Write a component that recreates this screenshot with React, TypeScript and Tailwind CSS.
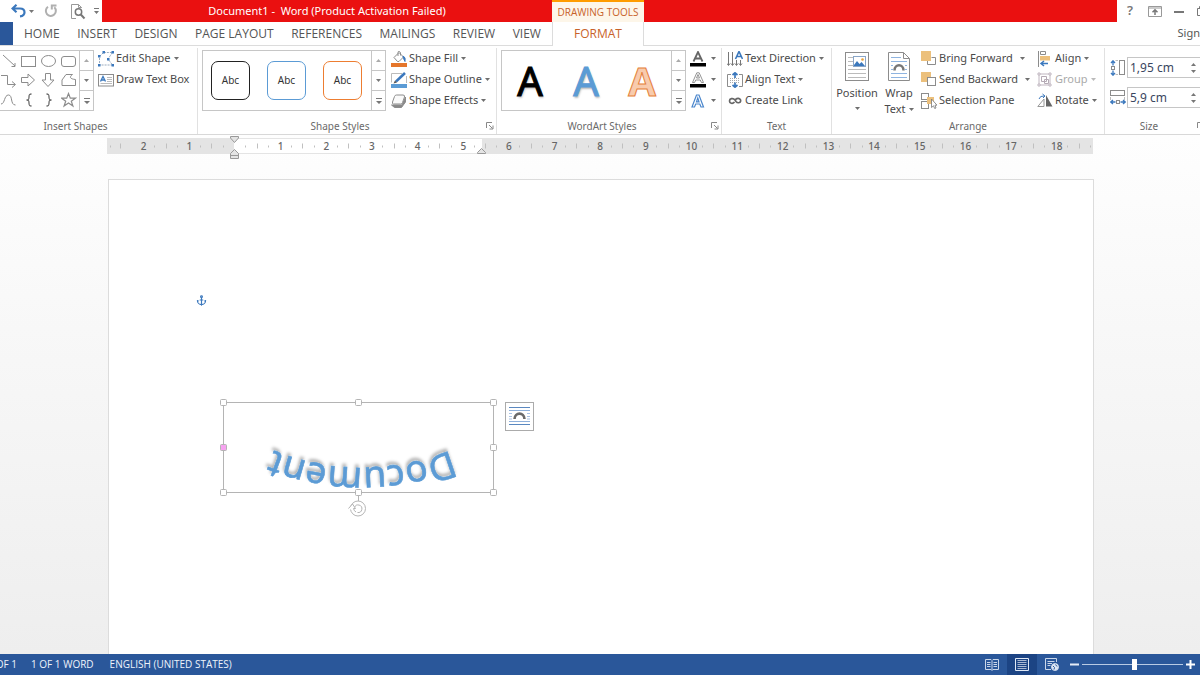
import React, { ReactNode } from "react";
import { Anchor } from "lucide-react";

const CAPS = "font-['Open_Sans','Noto_Sans',sans-serif]";

function Caret({ className = "" }: { className?: string }) {
  return (
    <svg className={`shrink-0 ${className}`} width="5" height="3" viewBox="0 0 5 3" aria-hidden="true">
      <path d="M0 0H5L2.5 3Z" fill="currentColor" />
    </svg>
  );
}

function Icon({ w = 16, h = 16, children }: { w?: number; h?: number; children: ReactNode }) {
  return (
    <svg className="shrink-0" width={w} height={h} viewBox={`0 0 ${w} ${h}`} fill="none" stroke="#8c8c8c" strokeWidth="1" aria-hidden="true">
      {children}
    </svg>
  );
}

/* ---------- Title bar ---------- */

function TitleBar() {
  return (
    <header className="flex h-[22px] bg-white text-[#777]">
      <div className="flex w-[102px] shrink-0 items-center pl-[11px]">
        <button aria-label="Undo" className="flex w-[18px] items-center text-[#3b78bd]">
          <svg width="15" height="14" viewBox="0 0 15 14" fill="none" stroke="currentColor" strokeWidth="2.200">
            <path d="M5.500.8 1.500 4.500l4 3.700M2 4.500h7c3 0 4.500 1.600 4.500 3.700 0 2.300-1.700 3.800-4.500 4.100" />
          </svg>
        </button>
        <button aria-label="Undo options" className="flex w-[15px] items-center">
          <Caret />
        </button>
        <button aria-label="Repeat" className="flex w-[26px] items-center text-[#b0b0b0]">
          <svg width="14" height="14" viewBox="0 0 14 14" fill="none" stroke="currentColor" strokeWidth="2">
            <path d="M4 2.800A5 5 0 1 0 10.300 3.300M7.800 5.500V1.500H12.500" />
          </svg>
        </button>
        <button aria-label="Print preview" className="flex w-[24px] items-center">
          <svg width="16" height="17" viewBox="0 0 16 17" fill="none" stroke="currentColor" strokeWidth="1">
            <path d="M6 15.500H1.500V1.500H8.500L11.500 4.500V5M8.500 1.500V4.500H11.500" stroke="#999" />
            <circle cx="8.500" cy="9" r="3.200" strokeWidth="1.500" />
            <path d="M10.800 11.500 14.500 15.500" strokeWidth="2" />
          </svg>
        </button>
        <button aria-label="Customize toolbar" className="flex items-center">
          <svg width="5" height="6" viewBox="0 0 5 6">
            <path d="M0 0H5V1H0ZM0 3H5L2.500 6Z" fill="currentColor" />
          </svg>
        </button>
      </div>
      <div className="flex w-[450px] shrink-0 items-center justify-center bg-[#ea1010] text-[11px] text-white">
        <h1 className="whitespace-pre">Document1 -  Word (Product Activation Failed)</h1>
      </div>
      <div className={`flex w-[92px] shrink-0 items-center justify-center border-t-2 border-[#ff9c00] bg-[#fdf6e9] text-[10px] text-[#c8622a] ${CAPS}`}>
        DRAWING TOOLS
      </div>
      <div className="min-w-0 flex-1 bg-[#ea1010]" />
      <div className="flex w-[83px] shrink-0 items-center overflow-hidden">
        <button aria-label="Help" className="w-[26px] shrink-0 text-center text-[13px] font-semibold">?</button>
        <button aria-label="Ribbon display options" className="flex w-[24px] shrink-0 justify-center">
          <svg width="14" height="11" viewBox="0 0 14 11" fill="none" stroke="currentColor">
            <path d="M.5.5H13.500V10.500H.5ZM.5 2H13.500" stroke="#999" />
            <path d="M7 9V4M4.500 6.300 7 3.900 9.500 6.300" strokeWidth="1.500" />
          </svg>
        </button>
        <button aria-label="Minimize" className="flex w-[24px] shrink-0 justify-center">
          <svg width="10" height="6" viewBox="0 0 10 6"><path d="M0 3H10V5H0Z" fill="currentColor" /></svg>
        </button>
        <button aria-label="Restore" className="flex w-[24px] shrink-0 pl-[6px]">
          <svg width="10" height="10" viewBox="0 0 10 10" fill="none" stroke="currentColor"><path d="M.5 2.500H7.500V9.500H.5ZM2.500 2.500V.5H9.500V7.500H7.500" /></svg>
        </button>
      </div>
    </header>
  );
}

/* ---------- Ribbon tabs ---------- */

const TABS = ["HOME", "INSERT", "DESIGN", "PAGE LAYOUT", "REFERENCES", "MAILINGS", "REVIEW", "VIEW"];

function Tabs() {
  return (
    <nav className={`flex h-[24px] bg-white text-[12px] text-[#555] ${CAPS}`}>
      <div className="flex w-[552px] shrink-0 border-b border-[#dcdcdc]">
        <button aria-label="File" className="w-[13px] shrink-0 bg-[#2a579a]" />
        <div className="flex flex-1 items-center justify-between pl-[11px] pr-[11px]">
          {TABS.map((t) => (
            <button key={t} className="whitespace-nowrap">{t}</button>
          ))}
        </div>
      </div>
      <button className="w-[92px] shrink-0 border-x border-[#dcdcdc] text-[#c8622a]">FORMAT</button>
      <div className="flex min-w-0 flex-1 items-center justify-end border-b border-[#dcdcdc]">
        <a href="#signin" className="whitespace-nowrap font-['Noto_Sans',sans-serif] text-[11px]">Sign</a>
      </div>
    </nav>
  );
}

/* ---------- Ribbon building blocks ---------- */

function Group({ label, className, launcher, children }: { label: string; className: string; launcher?: boolean; children: ReactNode }) {
  return (
    <section aria-label={label} className={`flex shrink-0 flex-col border-[#e1e1e1] ${className}`}>
      <div className="flex h-[70px]">{children}</div>
      <div className="flex h-[16px] items-center text-[10px] text-[#6a6a6a]">
        <span className="flex-1 text-center">{label}</span>
        {launcher && (
          <button aria-label={`${label} settings`} className="flex w-[14px] items-center pl-[4px]">
            <svg width="8" height="8" viewBox="0 0 8 8" fill="none" stroke="#888">
              <path d="M.5 6V.5H6M3 3 6.500 6.500M7 3.500V7H3.500" />
            </svg>
          </button>
        )}
      </div>
    </section>
  );
}

function ScrollButtons() {
  return (
    <div className="flex w-[14px] shrink-0 flex-col divide-y divide-[#c6c6c6] border-l border-[#c6c6c6] text-[#777]">
      <button aria-label="Scroll up" className="flex flex-1 items-center justify-center text-[#aaa]">
        <Caret className="rotate-180" />
      </button>
      <button aria-label="Scroll down" className="flex flex-1 items-center justify-center">
        <Caret />
      </button>
      <button aria-label="More" className="flex flex-1 items-center justify-center">
        <svg width="6" height="6" viewBox="0 0 6 6"><path d="M0 0H6V1H0ZM0 3H6L3 6Z" fill="currentColor" /></svg>
      </button>
    </div>
  );
}

function Command({ icon, label, caret, wideCaret, disabled }: { icon: ReactNode; label?: string; caret?: boolean; wideCaret?: boolean; disabled?: boolean }) {
  return (
    <button disabled={disabled} className={`flex h-[21px] items-center whitespace-nowrap text-[11px] ${disabled ? "text-[#aaa]" : "text-[#4a4a4a]"}`}>
      <span className="flex w-[18px] shrink-0 items-center">{icon}</span>
      {label}
      {caret && <Caret className={`opacity-80 ${wideCaret ? "ml-[7px]" : "ml-[3px]"}`} />}
    </button>
  );
}

/* ---------- Insert Shapes ---------- */

const SHAPES: { name: string; d: ReactNode }[] = [
  { name: "Line", d: <path d="M2 2 14 13M14 10V13.500H10.500" /> },
  { name: "Rectangle", d: <rect x=".5" y="3.500" width="14" height="10" /> },
  { name: "Oval", d: <ellipse cx="7.500" cy="8" rx="7" ry="5.500" /> },
  { name: "Rounded rectangle", d: <rect x=".5" y="3.500" width="14" height="10" rx="2.500" /> },
  { name: "Elbow connector", d: <path d="M0 3.500H6.500V12.500H14M11 9.500 14.500 12.500 11 15.500" /> },
  { name: "Right arrow", d: <path d="M.5 5.500H7V2L13.500 8 7 14V10.500H.5Z" /> },
  { name: "Down arrow", d: <path d="M4.500 1.500V8H1L7 14.500 13 8H9.500V1.500Z" /> },
  { name: "Freeform", d: <path d="M1 13.500V8L5 2.500H11.500C8 5 9 7 14.500 7.500V13.500Z" /> },
  { name: "Curve", d: <path d="M0 12C4 12 3 3 7.500 3S9 13 14.500 13" /> },
  { name: "Left brace", d: <path d="M10.500 2C8 2 8 3 8 5S8 8 5.500 8C8 8 8 9 8 11S8 14 10.500 14" stroke="#666" strokeWidth="1.300" /> },
  { name: "Right brace", d: <path d="M5.500 2C8 2 8 3 8 5S8 8 10.500 8C8 8 8 9 8 11S8 14 5.500 14" stroke="#666" strokeWidth="1.300" /> },
  { name: "Star", d: <path d="M7.500 1.500 9.300 6.200H14.300L10.300 9.200 11.900 14 7.500 11 3.100 14 4.700 9.200.700 6.200H5.700Z" strokeWidth="1.200" /> },
];

function InsertShapes() {
  return (
    <Group label="Insert Shapes" className="w-[198px] border-r [&>div:last-child]:pr-[46px]">
      <div className="mt-[2px] flex h-[61px] w-[94px] shrink-0 justify-end overflow-hidden border border-l-0 border-[#c6c6c6]">
        <div className="grid shrink-0 grid-cols-[20px_20px_20px_20px]">
          {SHAPES.map((s) => (
            <button key={s.name} aria-label={s.name} className="flex items-center justify-center">
              <Icon>{s.d}</Icon>
            </button>
          ))}
        </div>
        <ScrollButtons />
      </div>
      <div className="ml-[4px] flex flex-col">
        <Command
          label="Edit Shape"
          caret
          icon={
            <Icon>
              <path d="M1.500 5.500 5.500 1.500H14.500L10 8 14.500 14H1.500Z" strokeDasharray="2 1" stroke="#9aabbf" />
              <g fill="#3b78bd" stroke="none">
                <path d="M0 4h2.500v2.500H0zM4.500 0H7v2.500H4.500zM13.500 0H16v2.500H13.500zM9 7h2.500v2.500H9zM13.500 13H16v2.500H13.500zM0 13h2.500v2.500H0z" />
              </g>
            </Icon>
          }
        />
        <Command
          label="Draw Text Box"
          icon={
            <Icon>
              <rect x=".5" y="2.500" width="15" height="11.500" />
              <path d="M9 5.500H14M9 7.500H14M9 9.500H14M2.500 11.500H14" stroke="#bbb" />
              <path d="M2.500 9.500 5 4.500 7.500 9.500M3.500 8H6.500" stroke="#3b78bd" strokeWidth="1.300" />
            </Icon>
          }
        />
      </div>
    </Group>
  );
}

/* ---------- Shape Styles ---------- */

const SHAPE_STYLES = ["border-[#222]", "border-[#5b9bd5]", "border-[#ed7d31]"];

function ShapeStyles() {
  return (
    <Group label="Shape Styles" launcher className="w-[299px] border-r">
      <div className="ml-[4px] mt-[2px] flex h-[61px] w-[184px] shrink-0 border border-[#c6c6c6]">
        <div className="flex flex-1 items-center gap-[17px] pl-[8px]">
          {SHAPE_STYLES.map((c) => (
            <button key={c} className={`h-[39px] w-[39px] rounded-[7px] border text-[10px] text-[#333] ${c}`}>
              Abc
            </button>
          ))}
        </div>
        <ScrollButtons />
      </div>
      <div className="ml-[5px] flex flex-col">
        <Command
          label="Shape Fill"
          caret
          icon={
            <Icon>
              <path d="M3 6.500 8 1.500 12.500 6 8 10.500H6.500Z" fill="#fff" />
              <path d="M7 5V1.500Q7 0 8.500.5L9.500 1.500V4.500" />
              <path d="M12 5Q15 6 14 10.500L12.500 7.500Z" fill="#3b78bd" stroke="#3b78bd" />
              <path d="M0 12H16V16H0Z" fill="#e5762b" stroke="none" />
            </Icon>
          }
        />
        <Command
          label="Shape Outline"
          caret
          icon={
            <Icon>
              <path d="M11 1.500H.5V10.500M15.500 4V11" stroke="#bbb" />
              <path d="M5 9.500 14 1" stroke="#3b78bd" strokeWidth="2.500" />
              <path d="M2.500 11.500 4 8.500 6 10.500Z" fill="#555" stroke="none" />
              <path d="M0 12H16V16H0Z" fill="#5b9bd5" stroke="none" />
            </Icon>
          }
        />
        <Command
          label="Shape Effects"
          caret
          icon={
            <Icon>
              <path d="M.5 12 3.500 14.500H10.500L14.500 9V4L11 12Z" fill="#888" />
              <path d="M5.500 2H12Q14 2 13.500 4L11.500 9.500Q11 11 9.500 11H2.500Q1 11 1.500 9L3.500 3.500Q4 2 5.500 2Z" fill="#fafafa" />
            </Icon>
          }
        />
      </div>
    </Group>
  );
}

/* ---------- WordArt Styles ---------- */

function WordArtStyles() {
  return (
    <Group label="WordArt Styles" launcher className="w-[225px] border-r">
      <div className="ml-[4px] mt-[2px] flex h-[61px] w-[185px] shrink-0 border border-[#c6c6c6]">
        <div className="flex flex-1 items-center text-[40px] leading-none">
          <button aria-label="Black fill" className="w-[56px] text-black [-webkit-text-stroke:1px_#000] [text-shadow:1px_2px_2px_#ccc]">A</button>
          <button aria-label="Blue fill" className="w-[56px] text-[#5b9bd5] [-webkit-text-stroke:1px_#5b9bd5] [text-shadow:1px_2px_2px_#bbb]">A</button>
          <button aria-label="Orange outline" className="w-[56px] font-bold text-[#f8cbad] [-webkit-text-stroke:1px_#e5803b]">A</button>
        </div>
        <ScrollButtons />
      </div>
      <div className="ml-[4px] flex flex-col">
        <Command
          caret
          icon={
            <Icon>
              <path d="M3.500 10.500 8 1 12.500 10.500M5 7.500H11" stroke="#666" strokeWidth="1.800" />
              <path d="M0 12H16V15.500H0Z" fill="#000" stroke="none" />
            </Icon>
          }
        />
        <Command
          caret
          icon={
            <Icon>
              <path d="M2.500 10.500 6.800.8H9.200L13.500 10.500H11.400L10.300 8H5.700L4.600 10.500ZM6.500 6H9.500L8 2.500Z" stroke="#888" strokeWidth=".9" />
              <path d="M0 12H16V15.500H0Z" fill="#000" stroke="none" />
            </Icon>
          }
        />
        <Command
          caret
          icon={
            <Icon>
              <path d="M2 14 6.500 2H9L13.500 14H11L9.800 11H5.700L4.500 14ZM6.500 8.800H9L7.750 5Z" stroke="#4a86cc" strokeWidth="1.200" />
            </Icon>
          }
        />
      </div>
    </Group>
  );
}

/* ---------- Text ---------- */

function TextGroup() {
  return (
    <Group label="Text" className="w-[110px] border-r">
      <div className="ml-[5px] flex flex-col">
        <Command
          label="Text Direction"
          caret
          icon={
            <Icon>
              <path d="M1.500 1V14M5.500 1V14M9.500 9V14M13.500 9V14M0 12.500 1.500 14.500 3 12.500M4 12.500 5.500 14.500 7 12.500M8 12.500 9.500 14.500 11 12.500M12 12.500 13.500 14.500 15 12.500" stroke="#777" />
              <path d="M8.500 8 12 .5 15.500 8M9.800 5.500H14.200" stroke="#3b78bd" strokeWidth="1.600" />
            </Icon>
          }
        />
        <Command
          label="Align Text"
          caret
          icon={
            <Icon>
              <path d="M4 2.500H.5V14.500H4M12 2.500H15.500V14.500H12" />
              <path d="M3 6.500H13M3 8.500H13M3 10.500H13" stroke="#aaa" strokeDasharray="1 1" />
              <path d="M8 6V1M5.500 3 8 .8 10.500 3M8 10.500V15.500M5.500 13 8 15.200 10.500 13" stroke="#3b78bd" strokeWidth="1.700" />
            </Icon>
          }
        />
        <Command
          label="Create Link"
          icon={
            <Icon>
              <path d="M7.500 9C5.500 11.500 2.500 10.300 2.500 8S6 4.500 8 7L9 8.500C10.500 10.500 13.500 10 13.700 7.800S11 4.500 8.500 6.500" stroke="#666" strokeWidth="1.700" />
            </Icon>
          }
        />
      </div>
    </Group>
  );
}

/* ---------- Arrange ---------- */

function Arrange() {
  return (
    <Group label="Arrange" className="w-[273px] border-r">
      <button className="ml-[3px] flex w-[44px] shrink-0 flex-col items-center pt-[4px] text-[11px] text-[#4a4a4a]">
        <Icon w={24} h={29}>
          <rect x=".5" y=".5" width="23" height="28" fill="#fff" />
          <path d="M3 5.500H8M3 9.500H8M3 13.500H8M3 17.500H21M3 21.500H21M3 25.500H21" stroke="#bbb" />
          <rect x="8.500" y="4.500" width="12" height="10" fill="#fff" stroke="#8aa6c8" />
          <path d="M9 13 12 9 14.500 12 16.500 10 20 14H9Z" fill="#3b78bd" stroke="none" />
          <circle cx="17.500" cy="7.500" r="1.300" fill="#e9a13b" stroke="none" />
        </Icon>
        <span className="mt-[4px] leading-[16px]">Position</span>
        <Caret className="mt-[6px] opacity-80" />
      </button>
      <button className="flex w-[40px] shrink-0 flex-col items-center pt-[4px] text-[11px] text-[#4a4a4a]">
        <Icon w={22} h={29}>
          <path d="M.5.5H15.500L21.500 6.500V28.500H.5ZM15.500.5V6.500H21.500" fill="#fff" />
          <path d="M3 5.500H13M3 9.500H19M3 21.500H19M3 25.500H19M3 13.500H5M17 13.500H19M3 17.500H5M17 17.500H19" stroke="#8fb4e0" />
          <path d="M6.500 18.500C6.500 11.500 15.500 11.500 15.500 18.500" stroke="#777" strokeWidth="2.500" />
        </Icon>
        <span className="mt-[4px] leading-[16px]">Wrap</span>
        <span className="flex items-center leading-[16px]">Text<Caret className="ml-[3px] opacity-80" /></span>
      </button>
      <div className="ml-[2px] flex w-[115px] shrink-0 flex-col">
        <Command
          label="Bring Forward"
          caret
          wideCaret
          icon={
            <Icon>
              <path d="M10.500 6.500H14.500V13.500H6.500V10" />
              <path d="M0 0H10V10H0Z" fill="#ecc07c" stroke="none" />
            </Icon>
          }
        />
        <Command
          label="Send Backward"
          caret
          wideCaret
          icon={
            <Icon>
              <path d="M0 0H10V10H0Z" fill="#ecc07c" stroke="none" />
              <rect x="6.500" y="5.500" width="8" height="8" fill="#fff" />
            </Icon>
          }
        />
        <Command
          label="Selection Pane"
          icon={
            <Icon>
              <rect x=".5" y=".5" width="7" height="6" />
              <rect x=".5" y="8.500" width="7" height="7" />
              <path d="M6 4H13V11H6Z" fill="#ecc07c" stroke="none" />
              <path d="M10.500 6V14.500L12.500 12.800 13.700 15.500 15 15 14 12.200H16Z" fill="#fff" stroke="#777" strokeWidth=".8" />
            </Icon>
          }
        />
      </div>
      <div className="ml-[1px] flex flex-col">
        <Command
          label="Align"
          caret
          icon={
            <Icon>
              <path d="M1.500 0V16M3.500.5H8.500V3.500H3.500Z" />
              <path d="M3 5H13V9.500H3Z" fill="#ecc07c" stroke="none" />
              <path d="M11 12.500H4M7 10 4 12.500 7 15" stroke="#3b78bd" strokeWidth="1.500" />
            </Icon>
          }
        />
        <Command
          label="Group"
          caret
          disabled
          icon={
            <Icon>
              <path d="M1 1h2v2H1zM12 1h2v2H12zM1 12h2v2H1zM12 12h2v2H12zM3 2H12M3 13H12M2 3V12M13 3V12" stroke="#c0b6c0" />
              <path d="M4.500 4.500H9.500V9.500H4.500ZM7.500 7.500H11.500V11.500H7.500Z" stroke="#b5aab5" />
            </Icon>
          }
        />
        <Command
          label="Rotate"
          caret
          icon={
            <Icon>
              <path d="M9 2 15.500 13.500H9Z" fill="#666" stroke="none" />
              <path d="M7 6V13.500H.800Z" stroke="#999" />
              <path d="M2 6Q3 2.500 7 3M5.500 1 8 3 6 5" stroke="#3b78bd" />
            </Icon>
          }
        />
      </div>
    </Group>
  );
}

/* ---------- Size ---------- */

function SizeField({ id, label, value, icon }: { id: string; label: string; value: string; icon: ReactNode }) {
  return (
    <div className="flex h-[21px] items-center">
      <label htmlFor={id} aria-label={label} className="flex w-[17px] shrink-0">{icon}</label>
      <div className="flex h-[21px] w-[77px] shrink-0 border border-[#c6c6c6] bg-white">
        <input id={id} defaultValue={value} className="w-[63px] shrink-0 pl-[2px] text-[12px] text-[#3a4660] outline-none" />
        <div className="flex flex-col justify-center gap-[4px] text-[#777]">
          <button aria-label={`Increase ${label}`} className="flex"><Caret className="rotate-180" /></button>
          <button aria-label={`Decrease ${label}`} className="flex"><Caret /></button>
        </div>
      </div>
    </div>
  );
}

function Size() {
  return (
    <Group label="Size" launcher className="w-[102px]">
      <div className="ml-[5px] flex flex-col gap-[9px] pt-[9px]">
        <SizeField
          id="height"
          label="Height"
          value="1,95 cm"
          icon={
            <Icon>
              <rect x="9.500" y=".5" width="5" height="14" />
              <path d="M5.500.5H8M5.500 14.500H8" stroke="#bbb" />
              <rect x="1.500" y="6.500" width="3" height="3" />
              <path d="M3 5.500V1M1 3 3 .800 5 3M3 10.500V15M1 13 3 15.200 5 13" stroke="#3b78bd" strokeWidth="1.300" />
            </Icon>
          }
        />
        <SizeField
          id="width"
          label="Width"
          value="5,9 cm"
          icon={
            <Icon>
              <rect x=".5" y=".5" width="14" height="5" />
              <path d="M.5 7V10M14.500 7V10" stroke="#bbb" />
              <rect x="6.500" y="10.500" width="3" height="3" />
              <path d="M5.500 12H1M3 10 .800 12 3 14M10.500 12H15M13 10 15.200 12 13 14" stroke="#3b78bd" strokeWidth="1.300" />
            </Icon>
          }
        />
      </div>
    </Group>
  );
}

/* ---------- Ruler ---------- */

const CM = 45.65;
const ZERO = 127;

function Ruler() {
  const marks = Array.from({ length: 22 }, (_, i) => i - 2);
  return (
    <div className="mx-[107px] h-[16px] bg-[#e4e4e4]">
      <svg className="block w-full overflow-visible" height="22" aria-label="Ruler">
        <rect x={ZERO} y="1" width="248" height="14" fill="#fff" />
        {marks.map((n) => (
          <g key={n}>
            {n !== 0 && n < 19 && (
              <text x={ZERO + 1 + n * CM} y="12" textAnchor="middle" fontSize="10" fontWeight="500" fill="#666">
                {Math.abs(n)}
              </text>
            )}
            {n < 19 && (
              <g stroke="#c0c0c0">
                <path d={`M${Math.round(ZERO + (n + 0.5) * CM) + 0.5} 5.500v5`} />
                <path d={`M${Math.round(ZERO + (n + 0.25) * CM) + 0.5} 7.500v2M${Math.round(ZERO + (n + 0.75) * CM) + 0.5} 7.500v2`} />
              </g>
            )}
          </g>
        ))}
        <path d="M13.500 5.500v5M3.500 7.500v2" stroke="#c0c0c0" />
        <g fill="#e4e4e4" stroke="#999">
          <path d="M123.500-1.500H131.500V0L127.500 4.500 123.500 0Z" />
          <path d="M123.500 20.500V15.500L127.500 11.500 131.500 15.500V20.500ZM123.500 17.500H131.500" />
          <path d="M370.500 15.500V14.500L374.500 10.500 378.500 14.500V15.500Z" />
        </g>
      </svg>
    </div>
  );
}

/* ---------- Document canvas ---------- */

const HANDLES: [number, number, string][] = [
  [7, 7, "#fff"], [142, 7, "#fff"], [277, 7, "#fff"],
  [7, 52, "#f7a3f0"], [277, 52, "#fff"],
  [7, 97, "#fff"], [142, 97, "#fff"], [277, 97, "#fff"],
];

function WordArtObject() {
  return (
    <svg className="absolute left-[107px] top-[215px]" width="290" height="130" viewBox="0 0 290 130" fill="none">
      <defs>
        <path id="arc" d="M280.800 30A235 235 0 0 1 11.200 30" />
        <filter id="shadow" x="-10%" y="-30%" width="120%" height="160%">
          <feDropShadow dx="-1" dy="-3" stdDeviation="1.800" floodColor="#000" floodOpacity=".3" />
        </filter>
      </defs>
      <text fontSize="37" fill="#5b9bd5" stroke="#5b9bd5" strokeWidth=".6" textAnchor="middle" filter="url(#shadow)">
        <textPath href="#arc" startOffset="50%">Document</textPath>
      </text>
      <g stroke="#b4b4b4">
        <rect x="7.500" y="7.500" width="270" height="90" />
        <path d="M142.500 97V106" />
        {HANDLES.map(([x, y, fill]) => (
          <rect key={`${x}-${y}`} x={x - 2.5} y={y - 2.5} width="6" height="6" rx="1" fill={fill} />
        ))}
        <circle cx="142" cy="113.500" r="7.500" fill="#fff" />
        <path d="M138.500 112.500A3.800 3.800 0 1 1 141.500 117.500" />
        <path d="M132.500 113.500 136.500 109 139.500 113.500H137.500Q138 116 140 117" fill="#fff" />
      </g>
    </svg>
  );
}

function DocumentArea() {
  return (
    <main className="flex flex-1 flex-col bg-linear-to-b from-[#fefefe] to-[#eeeeee] pt-[3px]">
      <Ruler />
      <article className="relative ml-[108px] mr-[106px] mt-[25px] flex-1 border border-b-0 border-[#dcdcdc] bg-white">
        <Anchor className="absolute left-[87px] top-[115px] text-[#3b78bd]" size={11} strokeWidth={2.5} />
        <WordArtObject />
        <button aria-label="Layout options" className="absolute left-[396px] top-[222px] flex h-[29px] w-[29px] items-center justify-center border border-[#ababab] bg-white">
          <svg width="21" height="19" viewBox="0 0 21 19" fill="none" stroke="#5a88c0">
            <path d="M0 .5H21M0 17.500H21" />
            <path d="M0 3.500H21M0 14.500H21" stroke="#8fb0da" />
            <path d="M0 6.500H3M0 9.500H3M18 6.500H21M18 9.500H21M0 12H3M18 12H21" stroke="#a9c2e3" />
            <path d="M5.500 12C6 4.800 15 4.800 15.500 12" stroke="#6a6a6a" strokeWidth="2.600" />
          </svg>
        </button>
      </article>
    </main>
  );
}

/* ---------- Status bar ---------- */

function StatusBar() {
  return (
    <footer className={`flex h-[21px] items-center bg-[#2a579a] text-[10px] text-[#eef3fa] ${CAPS}`}>
      <span className="flex w-[17px] shrink-0 justify-end whitespace-nowrap">OF 1</span>
      <span className="ml-[14px] whitespace-nowrap">1 OF 1 WORD</span>
      <span className="ml-[16px] whitespace-nowrap">ENGLISH (UNITED STATES)</span>
      <div className="ml-auto flex h-full items-center">
        <button aria-label="Read mode" className="flex h-full w-[30px] items-center justify-center">
          <svg width="14" height="12" viewBox="0 0 14 12" fill="none" stroke="#c9d6ea">
            <path d="M.5.5H6L7 1.500 8 .5H13.500V10.500H8L7 11.500 6 10.500H.5ZM7 2V11M2 3.500H5.500M2 5.500H5.500M2 7.500H5.500M8.500 3.500H12M8.500 5.500H12M8.500 7.500H12" />
          </svg>
        </button>
        <button aria-label="Print layout" className="flex h-full w-[30px] items-center justify-center bg-[#1c4484]">
          <svg width="14" height="13" viewBox="0 0 14 13" fill="none" stroke="#dfe8f5">
            <path d="M.5.5H13.500V12.500H.5Z" />
            <path d="M2.500 2.500H11.500M2.500 4.500H11.500M2.500 6.500H11.500M2.500 8.500H11.500M2.500 10.500H11.500" stroke="#a9b8d2" />
          </svg>
        </button>
        <button aria-label="Web layout" className="flex h-full w-[30px] items-center justify-center">
          <svg width="14" height="13" viewBox="0 0 14 13" fill="none" stroke="#c9d6ea">
            <path d="M6 11.500H.5V.5H11.500V4M2.500 3.500H9.500M2.500 5.500H7M2.500 7.500H5.500" />
            <circle cx="10" cy="9" r="3.500" fill="#dfe8f5" />
            <path d="M8 8 9.500 9.500 9 11.500M10.500 6.500 12 8.500" stroke="#2a579a" />
          </svg>
        </button>
        <button aria-label="Zoom out" className="ml-[3px] flex">
          <svg width="9" height="9" viewBox="0 0 9 9"><path d="M0 3.500H9V5.500H0Z" fill="#e6edf7" /></svg>
        </button>
        <input
          type="range"
          aria-label="Zoom"
          defaultValue={52}
          className="mx-[3px] h-[12px] w-[101px] appearance-none bg-transparent [&::-webkit-slider-runnable-track]:h-px [&::-webkit-slider-runnable-track]:bg-[#b9cbe4] [&::-webkit-slider-thumb]:-mt-[5px] [&::-webkit-slider-thumb]:h-[11px] [&::-webkit-slider-thumb]:w-[5px] [&::-webkit-slider-thumb]:appearance-none [&::-webkit-slider-thumb]:bg-white"
        />
        <button aria-label="Zoom in" className="mr-[5px] flex">
          <svg width="9" height="9" viewBox="0 0 9 9"><path d="M0 3.500H9V5.500H0ZM3.500 0H5.500V9H3.500Z" fill="#fff" /></svg>
        </button>
      </div>
    </footer>
  );
}

export default function App() {
  return (
    <div className="flex min-h-screen flex-col overflow-hidden bg-white font-['Noto_Sans','Open_Sans',sans-serif] text-[#444]">
      <TitleBar />
      <Tabs />
      <div className="flex overflow-hidden border-b border-[#d8d8d8] bg-white pt-[2px]">
        <InsertShapes />
        <ShapeStyles />
        <WordArtStyles />
        <TextGroup />
        <Arrange />
        <Size />
      </div>
      <DocumentArea />
      <StatusBar />
    </div>
  );
}
